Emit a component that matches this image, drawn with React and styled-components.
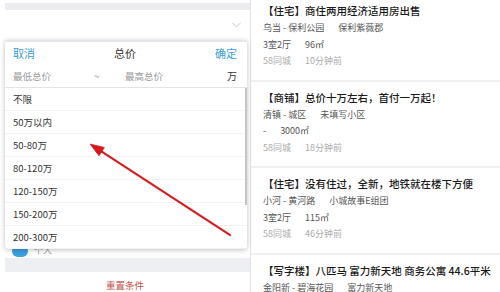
import React from 'react';
import styled, { createGlobalStyle } from 'styled-components';

const GlobalStyle = createGlobalStyle`
  html, body {
    margin: 0;
    padding: 0;
    background: #ffffff;
  }
  body {
    font-family: "Noto Sans CJK SC", "Noto Sans", "Liberation Sans", sans-serif;
    overflow: hidden;
  }
  * {
    box-sizing: border-box;
  }
`;

const Screen = styled.div`
  display: flex;
  width: 500px;
  height: 292px;
  overflow: hidden;
  background: #ffffff;
`;

/* ---------- left: filter panel ---------- */

const FilterPanel = styled.div`
  position: relative;
  width: 250px;
  height: 100%;
  display: flex;
  flex-direction: column;
`;

const TopStrip = styled.div`
  height: 7px;
  margin: 3px 0 0 5px;
  background: #ececf0;
`;

const SelectRow = styled.div`
  height: 30px;
  display: flex;
  align-items: center;
  justify-content: flex-end;
  padding-right: 9px;
`;

const FilterBody = styled.div`
  flex: 1;
  display: flex;
  flex-direction: column;
  justify-content: flex-end;
`;

const ToggleRow = styled.div`
  height: 18px;
  display: flex;
  align-items: center;
  gap: 6px;
  padding: 3px 0 0 12px;
`;

const ToggleIcon = styled.span`
  width: 16px;
  height: 12px;
  border-radius: 6px;
  background: #3aa0e0;
`;

const ToggleText = styled.span`
  font-size: 9px;
  color: #999;
`;

const GrayBand = styled.div`
  height: 14px;
  margin-left: 5px;
  background: #eeeff3;
`;

const ResetRow = styled.div`
  height: 20px;
  padding-top: 6px;
  display: flex;
  align-items: center;
  justify-content: center;
  font-size: 9.5px;
  color: #c8504a;
`;

const PricePopup = styled.div`
  position: absolute;
  top: 40px;
  left: 5px;
  width: 242px;
  height: 209px;
  background: #ffffff;
  border-top: 2px solid #e6e6ea;
  border-radius: 0 0 4px 4px;
  box-shadow: 0 1px 5px rgba(0, 0, 0, 0.25);
  display: flex;
  flex-direction: column;
  overflow: hidden;
`;

const PopupHeader = styled.div`
  height: 22px;
  display: flex;
  align-items: center;
  justify-content: space-between;
  padding: 0 10px 0 8px;
  font-size: 11px;
  color: #333;
`;

const HeaderAction = styled.span`
  color: #3b9dd4;
`;

const RangeRow = styled.div`
  height: 24px;
  display: grid;
  grid-template-columns: 81px 31px 1fr auto;
  align-items: center;
  padding: 0 10px 0 8px;
  font-size: 9.5px;
  color: #9a9a9a;
  border-bottom: 1px solid #e4e4e4;
`;

const UnitLabel = styled.span`
  color: #333;
  font-size: 10px;
`;

const OptionItem = styled.div`
  height: 23px;
  flex-shrink: 0;
  display: flex;
  align-items: center;
  padding-left: 8px;
  font-size: 9.5px;
  color: #333;
  border-bottom: 1px solid #f3f3f3;
`;

const ScrollThumb = styled.div`
  position: absolute;
  right: 0;
  top: 46px;
  width: 2px;
  height: 117px;
  background: #c4c4c4;
`;

const ArrowLayer = styled.svg`
  position: absolute;
  left: 0;
  top: 0;
  width: 250px;
  height: 292px;
  pointer-events: none;
`;

/* ---------- right: listings ---------- */

const ListingPanel = styled.div`
  flex: 1;
  border-left: 1px solid #e2e2e2;
  background: #efefef;
  display: flex;
  flex-direction: column;
  gap: 2px;
`;

const ListingCard = styled.div`
  flex-shrink: 0;
  background: #ffffff;
  padding: 9px 6px 10px 12px;

  &:first-child {
    padding-top: 4px;
  }
`;

const ListingTitle = styled.div`
  font-size: 10.5px;
  font-weight: 500;
  line-height: 14px;
  color: #1a1a1a;
  white-space: nowrap;
  margin-bottom: 2px;
`;

const MetaLine = styled.div`
  display: flex;
  gap: 14px;
  font-size: 9px;
  line-height: 16.5px;
  white-space: nowrap;
  color: ${(p) => (p.$muted ? '#ababab' : '#555')};
`;

const priceOptions = ['不限', '50万以内', '50-80万', '80-120万', '120-150万', '150-200万', '200-300万'];

const listings = [
  { title: '【住宅】商住两用经济适用房出售', area: '乌当 - 保利公园', estate: '保利紫薇郡', rooms: '3室2厅', size: '96㎡', time: '10分钟前' },
  { title: '【商铺】总价十万左右，首付一万起！', area: '清镇 - 城区', estate: '未填写小区', rooms: '-', size: '3000㎡', time: '18分钟前' },
  { title: '【住宅】没有住过，全新，地铁就在楼下方便', area: '小河 - 黄河路', estate: '小城故事E组团', rooms: '3室2厅', size: '115㎡', time: '46分钟前' },
  { title: '【写字楼】八匹马 富力新天地 商务公寓 44.6平米', area: '金阳新 - 碧海花园', estate: '富力新天地', rooms: '', size: '', time: '' },
];

const Chevron = () => (
  <svg width="9" height="6" viewBox="0 0 9 6">
    <polyline points="0.5,0.8 4.5,5 8.5,0.8" fill="none" stroke="#c4c4c4" strokeWidth="1" />
  </svg>
);

export default function App() {
  return (
    <Screen>
      <GlobalStyle />
      <FilterPanel>
        <TopStrip />
        <SelectRow>
          <Chevron />
        </SelectRow>
        <FilterBody>
          <ToggleRow>
            <ToggleIcon />
            <ToggleText>个人</ToggleText>
          </ToggleRow>
        </FilterBody>
        <GrayBand />
        <ResetRow>重置条件</ResetRow>

        <PricePopup>
          <PopupHeader>
            <HeaderAction>取消</HeaderAction>
            <span>总价</span>
            <HeaderAction>确定</HeaderAction>
          </PopupHeader>
          <RangeRow>
            <span>最低总价</span>
            <span>~</span>
            <span>最高总价</span>
            <UnitLabel>万</UnitLabel>
          </RangeRow>
          {priceOptions.map((opt) => (
            <OptionItem key={opt}>{opt}</OptionItem>
          ))}
          <ScrollThumb />
        </PricePopup>

        <ArrowLayer viewBox="0 0 250 292">
          <line x1="100" y1="150.5" x2="230" y2="235" stroke="#a01010" strokeWidth="2.6" strokeLinecap="round" opacity="0.35" />
          <line x1="100" y1="150.5" x2="230" y2="235" stroke="#d81818" strokeWidth="1.8" strokeLinecap="round" />
          <polygon points="90,144 104.4,147.4 99,155.8" fill="#e01515" stroke="#b01010" strokeWidth="0.6" />
        </ArrowLayer>
      </FilterPanel>

      <ListingPanel>
        {listings.map((item) => (
          <ListingCard key={item.title}>
            <ListingTitle>{item.title}</ListingTitle>
            <MetaLine>
              <span>{item.area}</span>
              <span>{item.estate}</span>
            </MetaLine>
            {item.size && (
              <MetaLine>
                <span>{item.rooms}</span>
                <span>{item.size}</span>
              </MetaLine>
            )}
            {item.time && (
              <MetaLine $muted>
                <span>58同城</span>
                <span>{item.time}</span>
              </MetaLine>
            )}
          </ListingCard>
        ))}
      </ListingPanel>
    </Screen>
  );
}
